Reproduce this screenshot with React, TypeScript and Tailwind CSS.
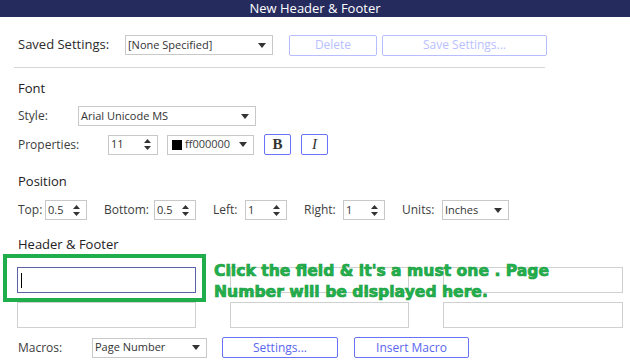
import React from 'react';

const font = { fontFamily: '"Open Sans", "Noto Sans", sans-serif' };

const Caret = () => (
  <svg width="8" height="5" viewBox="0 0 8 5" className="shrink-0">
    <path d="M0 0h8L4 5z" fill="#333" />
  </svg>
);

const Spin = () => (
  <svg width="7" height="11" viewBox="0 0 7 11" className="shrink-0">
    <path d="M0 4L3.5 0 7 4z" fill="#333" />
    <path d="M0 7h7L3.5 11z" fill="#333" />
  </svg>
);

const Select = ({ value, className }: { value: string; className: string }) => (
  <div className={`flex items-center justify-between h-[20px] border border-[#c8c8c8] bg-white pl-[2px] pr-[6px] text-[11px] text-[#333] ${className}`}>
    <span>{value}</span>
    <Caret />
  </div>
);

const NumberBox = ({ value, className }: { value: string; className: string }) => (
  <div className={`flex items-center justify-between h-[20px] border border-[#c8c8c8] bg-white pl-[2px] pr-[6px] text-[11px] text-[#333] ${className}`}>
    <span>{value}</span>
    <Spin />
  </div>
);

const Field = ({ className = '' }: { className?: string }) => (
  <div className={`h-[26px] border border-[#d0d0d0] bg-white ${className}`} />
);

const Btn = ({ label, className, faded }: { label: string; className: string; faded?: boolean }) => (
  <div
    className={`flex items-center justify-center h-[21px] border rounded-[2px] text-[12px] ${
      faded ? 'border-[#b7beff] text-[#b8bfff]' : 'border-[#6874f5] text-[#5a66f0]'
    } ${className}`}
  >
    {label}
  </div>
);

export default function App() {
  return (
    <div className="relative w-[630px] h-[364px] bg-white overflow-hidden" style={font}>
      <div className="h-[17px] bg-[#262b5e] text-white text-[13px] leading-[17px] text-center">New Header &amp; Footer</div>

      <div className="pl-[18px] text-[#3d3d3d]">
        <div className="flex items-center h-[22px] mt-[17px]">
          <span className="w-[107px] text-[13px] text-[#2a2a2a]">Saved Settings:</span>
          <Select value="[None Specified]" className="w-[148px] h-[19px]" />
          <Btn label="Delete" faded className="ml-[16px] w-[88px]" />
          <Btn label="Save Settings..." faded className="ml-[5px] w-[165px]" />
        </div>
        <div className="h-px bg-[#d6d6d6] w-[531px] ml-[-4px] mt-[11px]" />

        <div className="text-[13px] mt-[12px] leading-[16px] text-[#222]">Font</div>
        <div className="flex items-center mt-[10px] text-[12px]">
          <span className="w-[60px]">Style:</span>
          <Select value="Arial Unicode MS" className="w-[178px]" />
        </div>
        <div className="flex items-center mt-[8px] text-[12px]">
          <span className="w-[90px]">Properties:</span>
          <NumberBox value="11" className="w-[50px]" />
          <div className="ml-[9px] flex items-center justify-between w-[87px] h-[20px] border border-[#c8c8c8] pl-[4px] pr-[6px] text-[11px]">
            <span className="flex items-center gap-[3px]">
              <span className="w-[10px] h-[10px] bg-black inline-block" />
              ff000000
            </span>
            <Caret />
          </div>
          <div className="ml-[10px] w-[27px] h-[21px] border border-[#6874f5] rounded-[2px] flex items-center justify-center font-bold text-[15px] text-[#333]" style={{ fontFamily: '"Liberation Serif", serif' }}>
            B
          </div>
          <div className="ml-[10px] w-[27px] h-[21px] border border-[#6874f5] rounded-[2px] flex items-center justify-center italic text-[15px] text-[#333]" style={{ fontFamily: '"Liberation Serif", serif' }}>
            I
          </div>
        </div>

        <div className="text-[13px] mt-[18px] leading-[16px] text-[#222]">Position</div>
        <div className="flex items-center mt-[11px] text-[12px]">
          <span className="w-[27px]">Top:</span>
          <NumberBox value="0.5" className="w-[42px]" />
          <span className="ml-[17px] w-[50px]">Bottom:</span>
          <NumberBox value="0.5" className="w-[42px]" />
          <span className="ml-[17px] w-[32px]">Left:</span>
          <NumberBox value="1" className="w-[42px]" />
          <span className="ml-[17px] w-[39px]">Right:</span>
          <NumberBox value="1" className="w-[42px]" />
          <span className="ml-[17px] w-[40px]">Units:</span>
          <Select value="Inches" className="w-[67px]" />
        </div>

        <div className="text-[13px] mt-[16px] leading-[16px] text-[#222]">Header &amp; Footer</div>
        <div className="grid grid-cols-[179px_179px_180px] gap-x-[34px] gap-y-[9px] mt-[15px] ml-[-1px]">
          <div className="h-[26px] border border-[#5a63a8] bg-white flex items-center pl-[3px]">
            <span className="w-px h-[15px] bg-black" />
          </div>
          <Field />
          <Field />
          <Field />
          <Field />
          <Field />
        </div>

        <div className="flex items-center mt-[9px] text-[12px]">
          <span className="w-[74px]">Macros:</span>
          <Select value="Page Number" className="w-[115px]" />
          <Btn label="Settings..." className="ml-[15px] w-[116px]" />
          <Btn label="Insert Macro" className="ml-[16px] w-[115px]" />
        </div>
      </div>

      {/* annotation overlay */}
      <div className="absolute left-[3px] top-[254px] w-[203px] h-[48px] border-[4px] border-[#1fae4b]" />
      <div
        className="absolute left-[214px] top-[261px] text-[15.6px] leading-[21px] text-[#22b14c] font-black"
        style={{ fontFamily: '"DejaVu Sans", sans-serif', WebkitTextStroke: '0.7px #1e9e44' }}
      >
        Click the field &amp; it's a must one . Page
        <br />
        Number will be displayed here.
      </div>
    </div>
  );
}
